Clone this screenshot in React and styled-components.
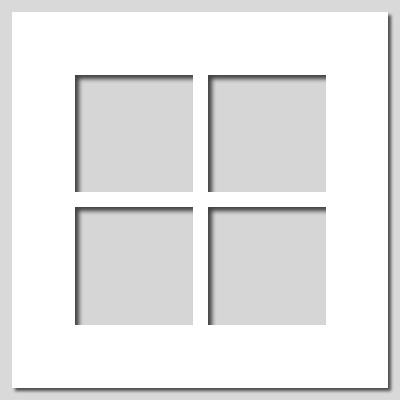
import React from 'react';
import styled, { createGlobalStyle } from 'styled-components';

const Global = createGlobalStyle`
  html, body {
    margin: 0;
    padding: 0;
    background: #d9d9d9;
  }
`;

const Page = styled.div`
  width: 400px;
  height: 400px;
  padding: 12px;
  box-sizing: border-box;
  background: #d9d9d9;
`;

const Mat = styled.div`
  width: 376px;
  height: 376px;
  box-sizing: border-box;
  padding: 63px 62px 62px 63px;
  background: #fff;
  box-shadow: 3px 3px 3px rgba(0, 0, 0, 0.65);
  display: grid;
  grid-template-columns: 118px 118px;
  grid-template-rows: 117px 118px;
  gap: 15px;
`;

const Opening = styled.div`
  background: #d6d6d6;
  box-shadow: inset 4px 4px 4px rgba(0, 0, 0, 0.7);
`;

export default function App() {
  return (
    <>
      <Global />
      <Page>
        <Mat>
          <Opening />
          <Opening />
          <Opening />
          <Opening />
        </Mat>
      </Page>
    </>
  );
}
